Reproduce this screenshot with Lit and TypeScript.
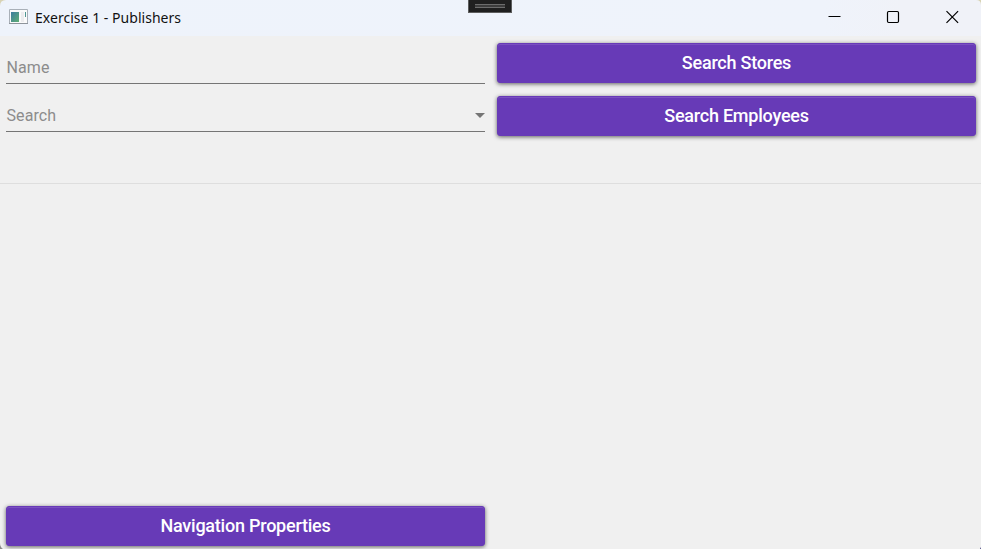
import { LitElement, html, css } from "lit";
import { customElement, property } from "lit/decorators.js";

@customElement("raised-button")
class RaisedButton extends LitElement {
  @property() label = "";
  static styles = css`
    :host { display: block; }
    .button {
      display: flex; align-items: center; justify-content: center;
      box-sizing: border-box; width: 100%; height: 40px; padding: 0;
      border: 1px solid #673ab7; border-radius: 3px;
      background: #673ab7; color: #fff;
      box-shadow: inset 0 1px 0 #7a50c0, 0 1px 4px rgba(0, 0, 0, .6);
      font: 500 18px/20px Roboto, sans-serif; letter-spacing: -.23px;
      white-space: nowrap;
    }
  `;
  render() {
    return html`<button class="button"><span>${this.label}</span></button>`;
  }
}

@customElement("app-root")
class AppRoot extends LitElement {
  static styles = css`
    :host {
      display: flex; flex-direction: column; position: relative;
      height: 549px; overflow: hidden; background: #f0f0f0;
      font-family: Roboto, sans-serif;
    }
    .corners {
      position: absolute; inset: 0; pointer-events: none;
    }
    .titlebar {
      height: 36px; flex: none; display: flex; align-items: center;
      background: linear-gradient(90deg, #eef3fb 0%, #eff3fb 84%, #f0f2f8 92%);
      box-sizing: border-box; padding-left: 9px;
    }
    .app-icon { width: 19px; height: 16px; flex: none; margin-top: -3px; }
    .title {
      margin-left: 7px; color: #111; white-space: nowrap;
      font: 14px/20px "Noto Sans", sans-serif; letter-spacing: .03px;
    }
    .controls { display: flex; margin-left: auto; }
    .controls svg { display: block; width: 58.5px; height: 36px; }
    .handle {
      position: absolute; top: 0; left: 468px; width: 44px; height: 13px;
      box-sizing: border-box; border: 1px solid #5d5d5d; border-top: 0;
      background: #1f1f1f; display: flex; justify-content: center; padding-top: 4px;
    }
    .grip {
      width: 30px; height: 4px; box-sizing: border-box;
      border: solid #6c6c6c; border-width: 1px 0; background: #3c3c3c;
    }
    .form {
      display: grid; grid-template-columns: 479px 479px; column-gap: 12px;
      height: 146px; padding: 7px 0 0 6px; box-sizing: border-box; flex: none;
    }
    .fields { display: flex; flex-direction: column; padding-top: 8px; gap: 15px; }
    .actions { display: flex; flex-direction: column; gap: 13px; }
    .field {
      height: 33px; box-sizing: border-box; border-bottom: 1px solid #757575;
      display: flex; align-items: center; justify-content: space-between;
      color: #8c8c8c; font-size: 16px; line-height: 20px;
    }
    .hint { padding: 2px 0 0 .5px; letter-spacing: .08px; }
    .caret { width: 10px; height: 5px; }
    .divider { height: 1px; flex: none; background: #dedede; margin-top: 1px; }
    .footer { margin-top: auto; padding: 0 0 3px 6px; width: 479px; }
  `;
  render() {
    return html`
      <div class="titlebar">
        <svg class="app-icon" viewBox="0 0 19 16">
          <defs><linearGradient id="g" x1="0" y1="0" x2="1" y2="1">
            <stop offset="0" stop-color="#3d7c9e"/><stop offset="1" stop-color="#5fae74"/>
          </linearGradient></defs>
          <path d="M.5.5h18v14H.5z" fill="#fafafa" stroke="#a9b0b8"/>
          <path d="M0 14.5h19" stroke="#8e949b"/>
          <path d="M2 3h8v10H2z" fill="url(#g)"/>
          <path d="M12 3h3v10h-3z" fill="#ececee"/>
          <path d="M16 3h1v5h-1z" fill="#4f9591"/>
        </svg>
        <span class="title">Exercise 1 - Publishers</span>
        <div class="controls">
          <svg viewBox="0 0 58.5 36"><path d="M23.5 16.5h12" stroke="#000" transform="translate(-1 0)"/></svg>
          <svg viewBox="0 0 58.5 36"><rect x="23.5" y="11.5" width="11" height="11" rx="1.2" fill="none" stroke="#000" stroke-width="1.2"/></svg>
          <svg viewBox="0 0 58.5 36"><path d="M23.5 11.2l11.6 11.6M35.1 11.2L23.5 22.8" stroke="#000" stroke-width="1.2"/></svg>
        </div>
      </div>
      <div class="handle"><div class="grip"></div></div>
      <div class="form">
        <div class="fields">
          <div class="field"><span class="hint">Name</span></div>
          <div class="field"><span class="hint">Search</span>
            <svg class="caret" viewBox="0 0 10 5"><path d="M0 0h10L5 5z" fill="#757575"/></svg>
          </div>
        </div>
        <div class="actions">
          <raised-button label="Search Stores"></raised-button>
          <raised-button label="Search Employees"></raised-button>
        </div>
      </div>
      <div class="divider"></div>
      <div class="footer"><raised-button label="Navigation Properties"></raised-button></div>
      <svg class="corners" width="981" height="549" viewBox="0 0 981 549">
        <path d="M0 0h6Q0 0 0 6z" fill="#d8d3b4"/>
        <path d="M981 0h-5q5 0 5 5z" fill="#d8d3b4"/>
        <path d="M0 549v-6q0 4 3 6z" fill="#888"/>
        <path d="M981 549v-2l-1 2z" fill="#3e3a78"/>
      </svg>`;
  }
}
